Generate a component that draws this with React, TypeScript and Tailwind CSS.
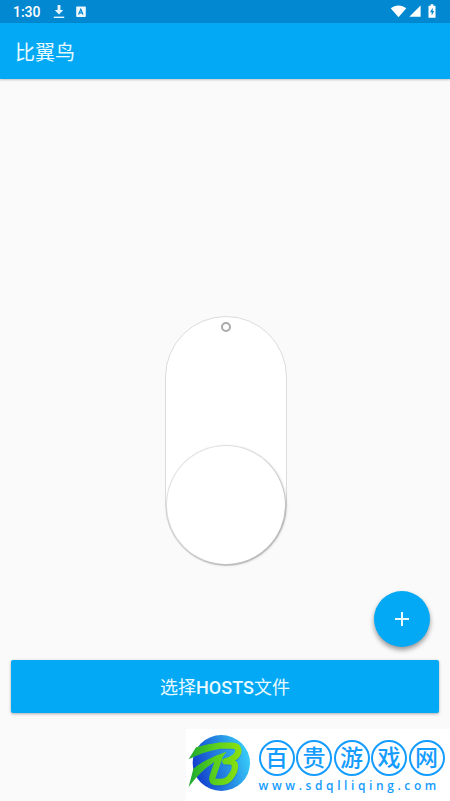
const siteName = ['百', '贵', '游', '戏', '网'];

function StatusBar() {
  return (
    <div className="flex h-[23px] shrink-0 items-center bg-[#0288d1] pl-[13px] pr-[14px] text-white">
      <span className="w-[28px] pt-px text-[14px] font-medium leading-[22px] tracking-[-0.05px]">1:30</span>
      <svg className="ml-[12px] h-[14px] w-[12px]" viewBox="0 0 12 14" fill="#e6f5fd">
        <path d="M4.6 0h2.8v5h2.9L6 9.4 1.7 5h2.9z" />
        <path d="M0.8 11.6h10.4v1.4H0.8z" />
      </svg>
      <svg className="ml-[11px] h-[12px] w-[10px]" viewBox="0 0 10 12">
        <rect x="0.2" y="0.4" width="9.6" height="10.6" rx="0.8" fill="#eef8fd" />
        <path d="M2.6 8.4 4.8 3.2 7 8.4M3.4 6.8h2.8" fill="none" stroke="#0288d1" strokeWidth="1.2" />
      </svg>
      <div className="ml-auto flex items-center pb-px">
        <svg className="h-[14px] w-[17px]" viewBox="0 0 17 14">
          <path d="M8.5 13.2 0.7 4.3C5 0.4 12 0.4 16.3 4.3z" fill="#fff" />
        </svg>
        <svg className="ml-[2px] h-[12px] w-[12px]" viewBox="0 0 12 12">
          <path d="M11.6 0.4v11.3H0.3z" fill="#fff" />
        </svg>
        <svg className="ml-[7px] h-[14px] w-[8px]" viewBox="0 0 8 14">
          <path d="M2.6 0.3h2.8v1.4h2.1v12H0.5v-12h2.1z" fill="#fff" />
          <path d="M4.7 3.8 2 8.2h1.7v3.4L6.2 7H4.7z" fill="#0288d1" />
        </svg>
      </div>
    </div>
  );
}

function PowerSwitch() {
  return (
    <div className="ml-[165px] mt-[237px] flex h-[250px] w-[122px] shrink-0 flex-col items-center justify-between rounded-full border border-[#dcdcdc] bg-white pb-px pt-[5px]">
      <div className="size-[10px] rounded-full border-2 border-[#aaaaaa]" />
      <div className="size-[118px] rounded-full bg-white shadow-[0_0_1px_1px_rgba(0,0,0,0.1),1px_1px_3px_rgba(0,0,0,0.25)]" />
    </div>
  );
}

function SiteLogo() {
  return (
    <svg className="h-[60px] w-[63px] shrink-0" viewBox="6 9 189 180">
      <defs>
        <linearGradient id="disc" x1="0" y1="0.65" x2="1" y2="0.35">
          <stop offset="0" stopColor="#1238cc" />
          <stop offset="0.5" stopColor="#2482df" />
          <stop offset="1" stopColor="#38d0fa" />
        </linearGradient>
        <linearGradient id="letter" gradientUnits="userSpaceOnUse" x1="8" y1="0" x2="168" y2="0">
          <stop offset="0" stopColor="#1ca832" />
          <stop offset="0.5" stopColor="#5bd01c" />
          <stop offset="1" stopColor="#8fe20c" />
        </linearGradient>
      </defs>
      <ellipse cx="106" cy="99" rx="86" ry="84" fill="url(#disc)" />
      <path
        d="M98 50H138C163 50 162 72 148 85Q137 95 118 98H132C152 100 151 121 140 137Q128 160 106 161H90Q73 161 78 144L96 94"
        fill="none"
        stroke="#1d55b4"
        strokeWidth="18"
        opacity="0.35"
      />
      <path
        d="M98 47H138C162 47 161 68 148 80Q137 90 118 94H132C151 96 150 117 139 133Q127 156 106 156H90Q75 156 80 139L101 80"
        fill="none"
        stroke="url(#letter)"
        strokeWidth="19"
        strokeLinejoin="round"
      />
      <path d="M30 52Q68 41 102 37.5V56Q55 64 8 88z" fill="url(#letter)" />
      <path d="M22 116Q58 86 122 65L108 84Q54 108 8 171z" fill="url(#letter)" />
    </svg>
  );
}

function SiteBanner() {
  return (
    <div className="mt-auto flex h-[72px] w-[264px] shrink-0 self-end bg-white pl-[2px] pt-[4px]">
      <SiteLogo />
      <div className="ml-[7.5px] flex flex-col pt-[7px] text-[#149cff]">
        <div className="flex gap-[1.5px]">
          {siteName.map((character) => (
            <span
              key={character}
              className="flex size-[36px] items-center justify-center rounded-full border-2 border-[#149cff] text-[23px] font-medium leading-none"
            >
              {character}
            </span>
          ))}
        </div>
        <span className="mt-px whitespace-nowrap font-['Open_Sans','DejaVu_Sans',sans-serif] text-[12px] font-semibold leading-[17px] tracking-[3.6px]">
          www.sdqlliqing.com
        </span>
      </div>
    </div>
  );
}

export default function App() {
  return (
    <main className="flex h-[801px] w-[450px] flex-col overflow-hidden bg-[#fafafa] font-['Roboto','Noto_Sans_CJK_SC',sans-serif]">
      <StatusBar />
      <header className="flex h-[56px] shrink-0 items-center bg-[#03a9f4] pl-[15px] pt-[4px] shadow-[0_1px_2px_rgba(0,0,0,0.22)]">
        <h1 className="text-[20px] font-normal leading-none text-[#e8f9ff]">比翼鸟</h1>
      </header>
      <PowerSwitch />
      <button
        aria-label="+"
        className="mr-[20px] mt-[25px] flex size-[56px] shrink-0 items-center justify-center self-end rounded-full bg-[#03a9f4] shadow-[0_3px_5px_rgba(0,0,0,0.4)]"
      >
        <svg className="size-[14px]" viewBox="0 0 14 14" stroke="#e9faff" strokeWidth="2">
          <path d="M7 0v14M0 7h14" />
        </svg>
      </button>
      <button className="mx-[11px] mt-[13px] flex h-[53px] shrink-0 items-center justify-center rounded-[2px] bg-[#03a9f4] pt-[2px] text-[18px] font-medium leading-none text-[#e8f9ff] shadow-[0_1px_3px_rgba(0,0,0,0.32)]">
        <span className="font-normal">选择</span>HOSTS<span className="font-normal">文件</span>
      </button>
      <SiteBanner />
    </main>
  );
}
